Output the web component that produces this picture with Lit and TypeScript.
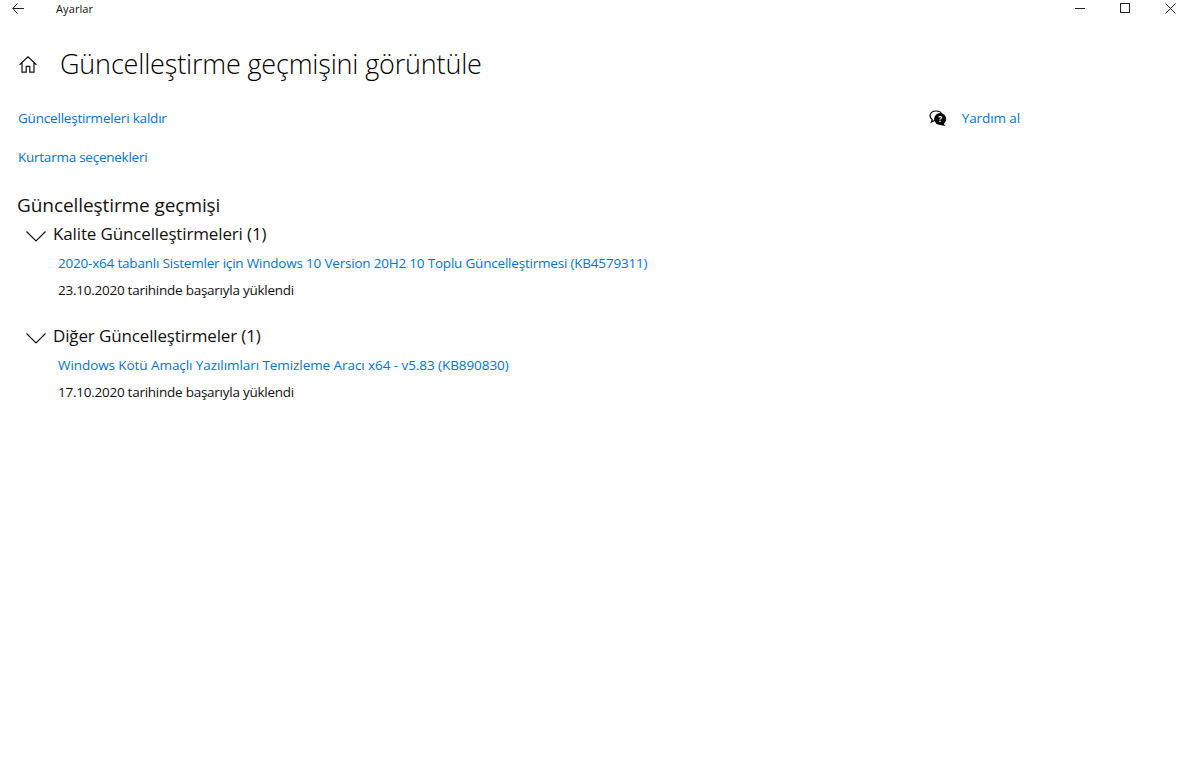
import { LitElement, html, css } from "lit";
import { customElement } from "lit/decorators.js";

const chevron = html`<svg class="chev" viewBox="0 0 20 11" width="20" height="11"><path d="M0.5 0.5 L10 10 L19.5 0.5" fill="none" stroke="#111" stroke-width="1.1"/></svg>`;

@customElement("app-root")
export class AppRoot extends LitElement {
  static styles = css`
    :host { display: block; width: 1181px; height: 772px; background: #fff; color: #000; font-family: "Open Sans", "Noto Sans", sans-serif; overflow: hidden; }
    .titlebar { display: flex; align-items: flex-start; height: 16px; }
    .back { margin: 3px 0 0 12px; width: 12px; height: 11px; }
    .app { margin: 1px 0 0 32px; font-size: 11px; letter-spacing: 0.1px; line-height: 16px; color: #111; }
    .winbtns { margin-left: auto; display: flex; gap: 35px; padding: 3px 5px 0 0; }
    .winbtns svg { display: block; }
    .head { display: flex; align-items: center; margin-top: 30px; padding-left: 19px; height: 36px; }
    .title { margin-left: 23px; font-size: 27px; letter-spacing: -0.17px; line-height: 36px; font-weight: 300; color: #000; white-space: nowrap; }
    .links { display: flex; justify-content: space-between; padding: 0 161px 0 18px; margin-top: 26px; height: 20px; align-items: center; }
    a { color: #0076d1; text-decoration: none; font-size: 13.5px; letter-spacing: -0.2px; line-height: 20px; white-space: nowrap; }
    .help { display: flex; align-items: center; }
    .help svg { margin-right: 15px; }
    .help a { letter-spacing: -0.1px; }
    .rec { padding-left: 18px; margin-top: 19px; height: 20px; display: flex; align-items: center; }
    .rec a { letter-spacing: -0.25px; }
    h2 { margin: 25px 0 0 17px; font-size: 19px; font-weight: 400; letter-spacing: -0.08px; line-height: 26px; color: #111; }
    .group { margin-top: 5px; }
    .group + .group { margin-top: 25px; }
    .ghead { display: flex; align-items: center; height: 22px; padding-left: 26px; }
    .chev { margin-top: 4px; }
    .gtitle { margin-left: 7px; font-size: 17px; letter-spacing: -0.14px; line-height: 22px; color: #111; white-space: nowrap; }
    .item { padding-left: 58px; }
    .item a { display: block; margin-top: 8px; }
    .item a.loose { letter-spacing: -0.07px; }
    .status { margin-top: 7px; font-size: 13.5px; letter-spacing: -0.25px; line-height: 20px; color: #111; white-space: nowrap; }
  `;

  render() {
    return html`
      <div class="titlebar">
        <svg class="back" viewBox="0 0 12 11"><path d="M5.5 0.5 L0.8 5.5 L5.5 10.5 M0.8 5.5 H12" fill="none" stroke="#222" stroke-width="1"/></svg>
        <span class="app">Ayarlar</span>
        <div class="winbtns">
          <svg width="10" height="10" viewBox="0 0 10 10"><path d="M0 5.5 H10" stroke="#222" stroke-width="1"/></svg>
          <svg width="10" height="10" viewBox="0 0 10 10"><rect x="0.5" y="0.5" width="9" height="9" fill="none" stroke="#222" stroke-width="1"/></svg>
          <svg width="11" height="11" viewBox="0 0 11 11"><path d="M0.5 0.5 L10.5 10.5 M10.5 0.5 L0.5 10.5" stroke="#222" stroke-width="1"/></svg>
        </div>
      </div>
      <div class="head">
        <svg width="18" height="17" viewBox="0 0 18 17"><path d="M0.6 8.8 L9 0.8 L17.4 8.8 M3 6.8 V16.2 H7.2 V10.4 H10.8 V16.2 H15 V6.8" fill="none" stroke="#111" stroke-width="1.2"/></svg>
        <span class="title">Güncelleştirme geçmişini görüntüle</span>
      </div>
      <div class="links">
        <a href="#">Güncelleştirmeleri kaldır</a>
        <div class="help">
          <svg width="18" height="17" viewBox="0 0 18 17">
            <path d="M7 1 C3.5 1 1 3 1 5.8 C1 7.5 2 8.8 3.2 9.6 L2.4 12 L5.6 10.4 C6 10.5 6.5 10.5 7 10.5" fill="#fff" stroke="#000" stroke-width="1.2"/>
            <path d="M7 1 C10 1 12.5 2.6 13 4.8" fill="none" stroke="#000" stroke-width="1.2"/>
            <circle cx="11.2" cy="9" r="6" fill="#000"/>
            <path d="M14 13 L16.5 16 L11 15 Z" fill="#000"/>
            <text x="11.2" y="12" font-size="8.5" font-weight="700" fill="#fff" text-anchor="middle" font-family="Open Sans">?</text>
          </svg>
          <a href="#">Yardım al</a>
        </div>
      </div>
      <div class="rec"><a href="#">Kurtarma seçenekleri</a></div>
      <h2>Güncelleştirme geçmişi</h2>
      <div class="group">
        <div class="ghead">${chevron}<span class="gtitle">Kalite Güncelleştirmeleri (1)</span></div>
        <div class="item">
          <a href="#">2020-x64 tabanlı Sistemler için Windows 10 Version 20H2 10 Toplu Güncelleştirmesi (KB4579311)</a>
          <div class="status">23.10.2020 tarihinde başarıyla yüklendi</div>
        </div>
      </div>
      <div class="group">
        <div class="ghead">${chevron}<span class="gtitle">Diğer Güncelleştirmeler (1)</span></div>
        <div class="item">
          <a class="loose" href="#">Windows Kötü Amaçlı Yazılımları Temizleme Aracı x64 - v5.83 (KB890830)</a>
          <div class="status">17.10.2020 tarihinde başarıyla yüklendi</div>
        </div>
      </div>
    `;
  }
}
